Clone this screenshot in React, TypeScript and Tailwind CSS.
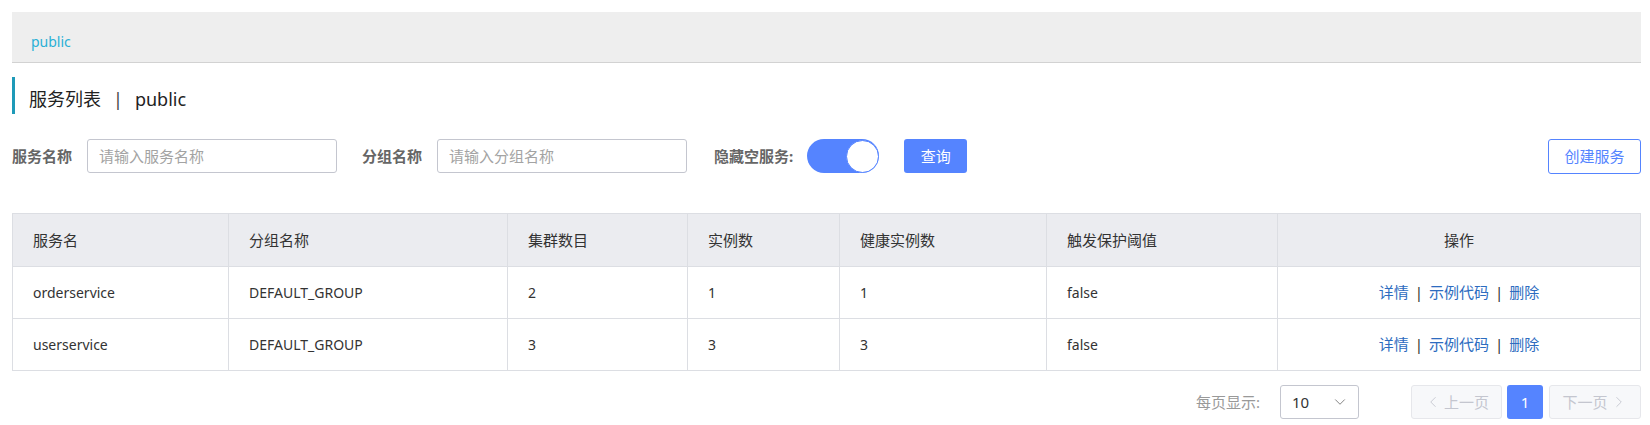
import { ChevronDown, ChevronLeft, ChevronRight } from "lucide-react";

type Service = {
  name: string;
  group: string;
  clusters: number;
  instances: number;
  healthy: number;
  threshold: string;
};

const services: Service[] = [
  { name: "orderservice", group: "DEFAULT_GROUP", clusters: 2, instances: 1, healthy: 1, threshold: "false" },
  { name: "userservice", group: "DEFAULT_GROUP", clusters: 3, instances: 3, healthy: 3, threshold: "false" },
];

const columns = [
  { title: "服务名", width: "w-[216px]" },
  { title: "分组名称", width: "w-[279px]" },
  { title: "集群数目", width: "w-[180px]" },
  { title: "实例数", width: "w-[152px]" },
  { title: "健康实例数", width: "w-[207px]" },
  { title: "触发保护阈值", width: "w-[231px]" },
  { title: "操作", width: "w-[363px]" },
];

function SearchBox({ label, placeholder }: { label: string; placeholder: string }) {
  return (
    <div className="flex items-center">
      <span className="font-bold text-[#666] text-[15px] mr-[15px]">{label}</span>
      <input
        className="h-[34px] w-[250px] rounded-[3px] border border-[#c4c6cf] px-[11px] text-[15px] text-[#333] outline-none placeholder:text-[#a3a3a3]"
        placeholder={placeholder}
      />
    </div>
  );
}

export default function App() {
  return (
    <div className="min-h-[425px] bg-white pl-3 pr-[9px] pt-3 font-['Noto_Sans','Noto_Sans_CJK_SC',sans-serif] text-[14px] text-[#333]">
      <div className="h-[51px] border-b border-[#d2d2d2] bg-[#eeeeee] pl-[19px] flex items-center pt-[8px]">
        <span className="text-[#2ab0d6]">public</span>
      </div>

      <div className="mt-[14px] h-[37px] border-l-[3px] border-[#1e9ab8] pl-[14px] flex items-center pt-[8px] text-[18px] text-[#222]">
        <span>服务列表</span>
        <span className="mx-[12px] text-[#444]">|</span>
        <span>public</span>
      </div>

      <div className="mt-[25px] flex items-center h-[34px]">
        <SearchBox label="服务名称" placeholder="请输入服务名称" />
        <div className="ml-[25px]">
          <SearchBox label="分组名称" placeholder="请输入分组名称" />
        </div>
        <span className="ml-[27px] font-bold text-[#666] text-[15px]">隐藏空服务:</span>
        <div className="ml-[14px] h-[34px] w-[72px] rounded-full bg-[#5584ff] flex items-center justify-end">
          <div className="h-[33px] w-[33px] rounded-full bg-white border border-[#5584ff]" />
        </div>
        <button className="ml-[25px] h-[34px] w-[63px] rounded-[3px] bg-[#5584ff] text-white text-[15px]">查询</button>
        <button className="ml-auto h-[35px] w-[93px] rounded-[3px] border border-[#5584ff] bg-white text-[#5584ff] text-[15px]">
          创建服务
        </button>
      </div>

      <table className="mt-[40px] w-full table-fixed border-collapse border border-[#dcdee3]">
        <colgroup>
          {columns.map((c) => (
            <col key={c.title} className={c.width} />
          ))}
        </colgroup>
        <thead>
          <tr className="h-[53px] bg-[#ebecf0]">
            {columns.map((c, i) => (
              <th
                key={c.title}
                className={`border border-[#dcdee3] px-[20px] font-normal text-[15px] text-[#333] ${
                  i === columns.length - 1 ? "text-center" : "text-left"
                }`}
              >
                {c.title}
              </th>
            ))}
          </tr>
        </thead>
        <tbody>
          {services.map((s) => (
            <tr key={s.name} className="h-[52px]">
              <td className="border border-[#dcdee3] px-[20px]">{s.name}</td>
              <td className="border border-[#dcdee3] px-[20px]">{s.group}</td>
              <td className="border border-[#dcdee3] px-[20px]">{s.clusters}</td>
              <td className="border border-[#dcdee3] px-[20px]">{s.instances}</td>
              <td className="border border-[#dcdee3] px-[20px]">{s.healthy}</td>
              <td className="border border-[#dcdee3] px-[20px]">{s.threshold}</td>
              <td className="border border-[#dcdee3] px-[20px] text-center text-[15px] text-[#2d6cc0]">
                <span>详情</span>
                <span className="mx-[6px] text-[#333]">|</span>
                <span>示例代码</span>
                <span className="mx-[6px] text-[#333]">|</span>
                <span>删除</span>
              </td>
            </tr>
          ))}
        </tbody>
      </table>

      <div className="mt-[14px] flex items-center justify-end h-[34px] text-[15px]">
        <span className="text-[#999] mr-[20px]">每页显示:</span>
        <div className="h-[34px] w-[79px] rounded-[3px] border border-[#c4c6cf] flex items-center justify-between pl-[11px] pr-[9px]">
          <span className="text-[#333]">10</span>
          <ChevronDown size={18} strokeWidth={1.2} className="text-[#777]" />
        </div>
        <button className="ml-[52px] h-[34px] w-[91px] rounded-[3px] border border-[#e6e7eb] bg-[#f7f8fa] text-[#c4c6cf] flex items-center justify-center gap-[2px]">
          <ChevronLeft size={18} strokeWidth={1.2} />
          上一页
        </button>
        <button className="ml-[5px] h-[34px] w-[36px] rounded-[3px] bg-[#5584ff] text-white">1</button>
        <button className="ml-[6px] h-[34px] w-[92px] rounded-[3px] border border-[#e6e7eb] bg-[#f7f8fa] text-[#c4c6cf] flex items-center justify-center gap-[2px]">
          下一页
          <ChevronRight size={18} strokeWidth={1.2} />
        </button>
      </div>
    </div>
  );
}
